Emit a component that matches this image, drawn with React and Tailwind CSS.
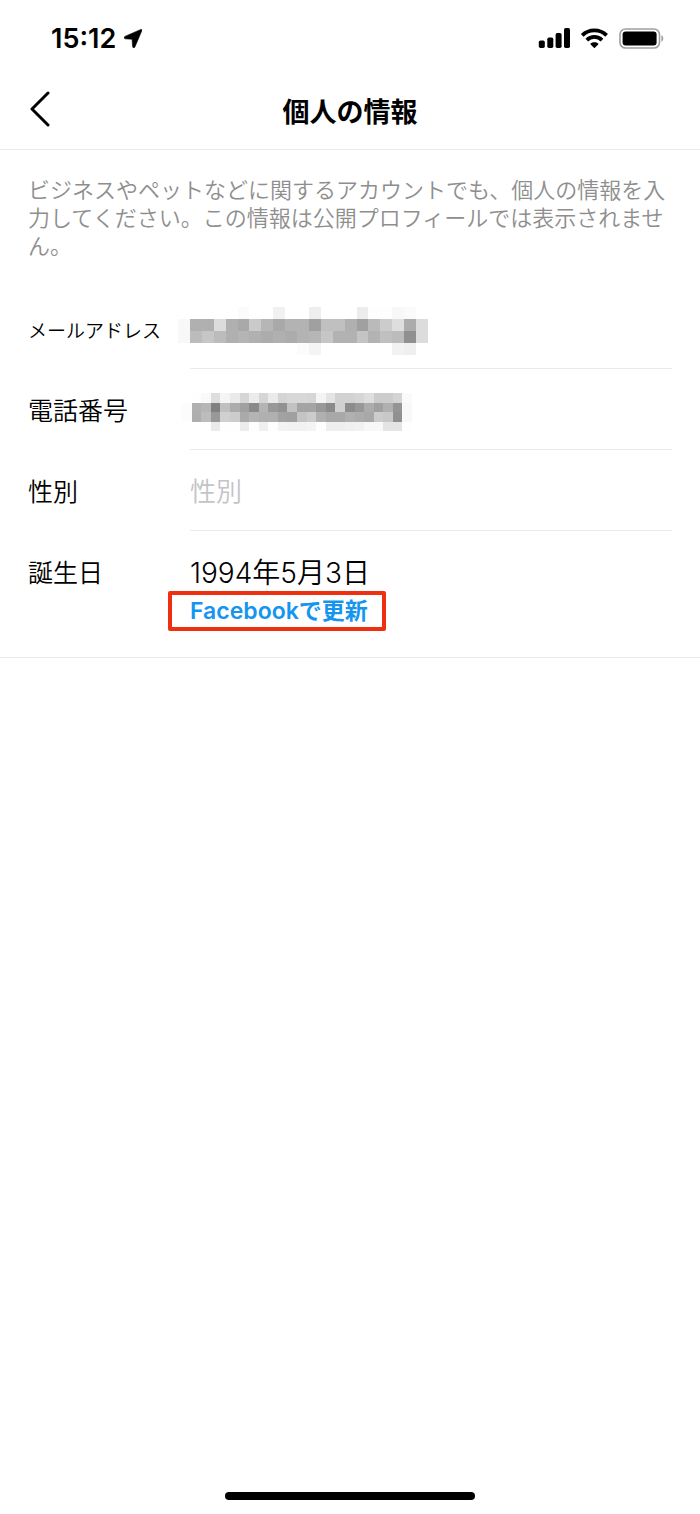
const emailCells = [
  "ff ff ff ff ff fb ff ff f1 ff ff ee ff ff ff ec fe fe f8 fb ff",
  "f8 b0 b0 dc b0 a9 ca b6 a9 b3 b3 a0 c0 c0 b0 a0 ba cc de ac dc",
  "f8 bc c6 bc b0 b5 b0 ac b0 ac b3 b6 c6 b2 b2 c4 b3 c0 bc 90 dc",
  "ff ff ff ff ff ff ff ff ff ff fc f4 ff ff ff ff ff ff f2 ef ff",
];

const phoneCells = [
  "ff fe f9 de f5 ea d6 ec d6 ea d4 d8 d8 d6 f4 e4 d2 d2 d6 de cc cc d4 fa",
  "fc b0 b6 80 c0 ac a0 8a b4 98 92 c2 a4 a4 98 8a d0 8c 98 ac a0 b0 94 f8",
  "fc ae bc 98 d0 cc aa b4 b0 b0 a2 a0 c4 cc b0 a8 a8 b0 ac a8 cc c8 90 f8",
  "ff ff ff ea fe fe ec fe f0 fe f3 f2 f2 f4 fe ee ee f0 f2 f8 f8 e4 e4 fe",
];

function Mosaic({ cells, label, className }) {
  const rows = cells.map((row) => row.split(" "));

  return (
    <svg
      role="img"
      aria-labelledby={label}
      viewBox={`0 0 ${rows[0].length} ${rows.length}`}
      preserveAspectRatio="none"
      shapeRendering="crispEdges"
      className={className}
    >
      {rows.map((row, y) =>
        row.map((shade, x) => (
          <rect
            key={`${x}-${y}`}
            x={x}
            y={y}
            width="1"
            height="1"
            fill={`#${shade}${shade}${shade}`}
          />
        )),
      )}
    </svg>
  );
}

function StatusBar() {
  return (
    <div className="flex h-[76px] items-center justify-between pr-9 pl-[51px]">
      <div className="flex items-center gap-2 pt-0.5">
        <span className="text-[27px] leading-8 font-semibold">15:12</span>
        {/* Location arrow */}
        <svg viewBox="0 0 18 19" className="mb-0.5 h-[19px] w-[18px]">
          <path
            d="M16.9.4.9 7.4C-.3 8 0 9.7 1.2 9.8l6.9.5.5 7.3c.1 1.4 1.7 1.7 2.3.4L17.9 1.5c.3-.8-.3-1.4-1-1.1Z"
            fill="currentColor"
            stroke="currentColor"
            strokeWidth="0.6"
          />
        </svg>
      </div>

      <div className="flex items-center gap-[10px]">
        {/* Signal */}
        <svg viewBox="0 0 32 20" className="h-5 w-8" fill="currentColor">
          <rect x="0.8" y="12.5" width="6" height="7.5" rx="1.7" />
          <rect x="9.3" y="9.5" width="6" height="10.5" rx="1.7" />
          <rect x="17.6" y="5" width="6" height="15" rx="1.7" />
          <rect x="26" y="0" width="6" height="20" rx="1.7" />
        </svg>
        {/* Wi-Fi */}
        <svg
          viewBox="0 0 28 20"
          className="h-5 w-7"
          fill="none"
          stroke="currentColor"
          strokeWidth="3.8"
        >
          <path d="M2.2 7.4a17.4 17.4 0 0 1 24.4 0" />
          <path d="M6.8 12.1a10.8 10.8 0 0 1 15.2 0" />
          <path
            d="M14.4 14.2c1.5 0 2.8.5 3.8 1.4.3.3.3.6 0 .9l-3.3 3.2c-.3.3-.7.3-1 0l-3.3-3.2c-.3-.3-.3-.6 0-.9 1-.9 2.3-1.4 3.8-1.4Z"
            fill="currentColor"
            stroke="none"
          />
        </svg>
        {/* Battery */}
        <svg viewBox="0 0 46 21" className="h-[21px] w-[46px]">
          <rect
            x="2"
            y="1"
            width="39.5"
            height="19"
            rx="5.5"
            fill="none"
            stroke="#a0a0a0"
            strokeWidth="1.6"
          />
          <rect x="4.6" y="3.6" width="34" height="14" rx="3" />
          <path d="M43.4 7.3c2.5 1 2.5 5.4 0 6.4Z" fill="#a0a0a0" />
        </svg>
      </div>
    </div>
  );
}

function Row({ label, divider = true, children }) {
  return (
    <div className="flex">
      <div className="flex h-[81px] w-[162px] shrink-0 items-center pt-1">
        {label}
      </div>
      <div
        className={
          divider ? "min-w-0 flex-1 border-b border-[#ebebeb]" : "min-w-0 flex-1"
        }
      >
        {children}
      </div>
    </div>
  );
}

export default function App() {
  return (
    <div
      lang="ja"
      className="flex min-h-screen flex-col bg-white font-['Inter','Noto_Sans_CJK_JP',sans-serif] text-black"
    >
      <StatusBar />

      <header className="grid h-[74px] grid-cols-[64px_1fr_64px] items-center border-b border-[#ebebeb]">
        <button type="button" aria-label="戻る" className="pb-2 pl-[29px]">
          <svg
            viewBox="0 0 22 36"
            className="h-9 w-[22px]"
            fill="none"
            stroke="currentColor"
            strokeWidth="3"
            strokeLinecap="round"
            strokeLinejoin="round"
          >
            <path d="M19 2 3 18l16 16" />
          </svg>
        </button>
        <h1 className="text-center text-[27px] leading-8 font-semibold">
          個人の情報
        </h1>
      </header>

      <form className="border-b border-[#ebebeb] px-7 pt-[26px] pb-[30px]">
        <p className="mb-7 text-[22px] leading-7 font-[350] text-[#8e8e8e]">
          ビジネスやペットなどに関するアカウントでも、個人の情報を入力してください。この情報は公開プロフィールでは表示されません。
        </p>

        <Row
          label={
            <span id="email-label" className="pt-1 text-[19px] font-[350]">
              メールアドレス
            </span>
          }
        >
          <div className="flex h-20 items-center pt-1.5">
            <Mosaic
              cells={emailCells}
              label="email-label"
              className="-ml-3 h-12 w-[250px]"
            />
          </div>
        </Row>

        <Row
          label={
            <span id="phone-label" className="text-[25px] font-[350]">
              電話番号
            </span>
          }
        >
          <div className="flex h-20 items-center pt-1.5">
            <Mosaic
              cells={phoneCells}
              label="phone-label"
              className="-ml-2 h-[38px] w-[230px]"
            />
          </div>
        </Row>

        <Row
          label={
            <label htmlFor="gender" className="text-[25px] font-[350]">
              性別
            </label>
          }
        >
          <input
            id="gender"
            type="text"
            placeholder="性別"
            className="h-20 w-full pt-0.5 text-[26px] font-[350] outline-none placeholder:text-[#c4c4c6]"
          />
        </Row>

        <Row
          divider={false}
          label={
            <label htmlFor="birthday" className="text-[25px] font-[350]">
              誕生日
            </label>
          }
        >
          <input
            id="birthday"
            type="text"
            defaultValue="1994年5月3日"
            className="mt-5 block h-10 w-full pt-1 text-[28px] font-[350] outline-none"
          />
          <a
            href="#facebook"
            className="relative mt-1 inline-block text-[23px] leading-8 font-semibold text-[#1595ee]"
          >
            Facebookで更新
            <span className="pointer-events-none absolute -inset-y-1 -right-[18px] -left-[22px] rounded-xs border-4 border-[#ee2f10]" />
          </a>
        </Row>
      </form>

      <div className="mt-auto flex justify-center pb-[14px]">
        <div className="h-2 w-[250px] rounded-full bg-black" />
      </div>
    </div>
  );
}
